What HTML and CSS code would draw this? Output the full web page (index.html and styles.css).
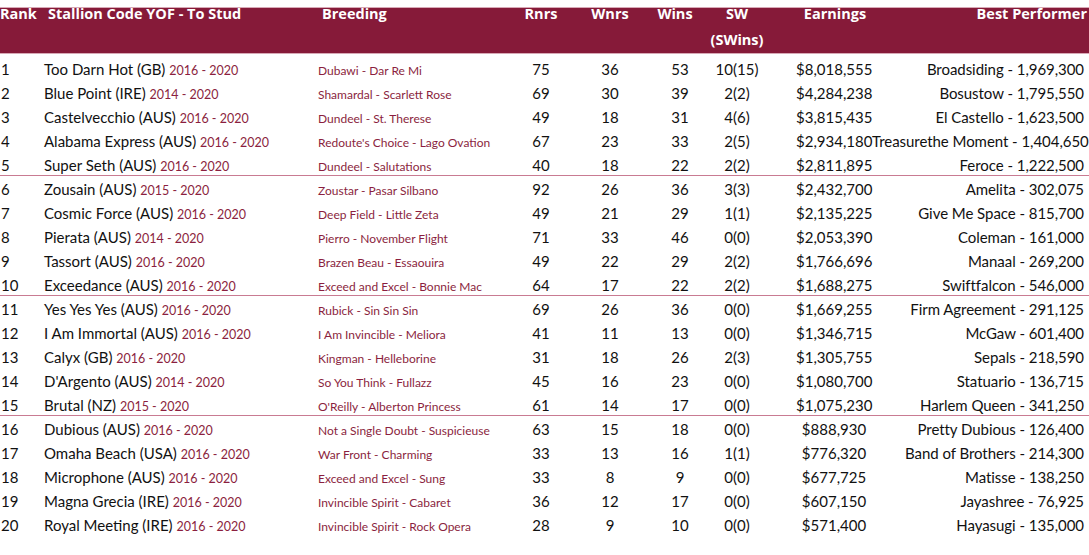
FILE: index.html
```html
<!DOCTYPE html>
<html>
<head>
<meta charset="utf-8">
<link rel="stylesheet" href="styles.css">
</head>
<body>
<div class="table">
  <div class="head">
    <div class="c rank">Rank</div>
    <div class="c name">Stallion Code YOF - To Stud</div>
    <div class="c breed">Breeding</div>
    <div class="c num">Rnrs</div>
    <div class="c num">Wnrs</div>
    <div class="c num wins">Wins</div>
    <div class="c sw">SW<br>(SWins)</div>
    <div class="c earn">Earnings</div>
    <div class="c best">Best Performer</div>
  </div>
  <div class="body">
    <div class="row"><div class="rank">1</div><div class="name">Too Darn Hot (GB) <span class="yr">2016 - 2020</span></div><div class="breed"><span>Dubawi - Dar Re Mi</span></div><div class="num">75</div><div class="num">36</div><div class="num">53</div><div class="sw">10(15)</div><div class="earn">$8,018,555</div><div class="best">Broadsiding - 1,969,300</div></div>
    <div class="row"><div class="rank">2</div><div class="name">Blue Point (IRE) <span class="yr">2014 - 2020</span></div><div class="breed"><span>Shamardal - Scarlett Rose</span></div><div class="num">69</div><div class="num">30</div><div class="num">39</div><div class="sw">2(2)</div><div class="earn">$4,284,238</div><div class="best">Bosustow - 1,795,550</div></div>
    <div class="row"><div class="rank">3</div><div class="name">Castelvecchio (AUS) <span class="yr">2016 - 2020</span></div><div class="breed"><span>Dundeel - St. Therese</span></div><div class="num">49</div><div class="num">18</div><div class="num">31</div><div class="sw">4(6)</div><div class="earn">$3,815,435</div><div class="best">El Castello - 1,623,500</div></div>
    <div class="row"><div class="rank">4</div><div class="name">Alabama Express (AUS) <span class="yr">2016 - 2020</span></div><div class="breed"><span>Redoute's Choice - Lago Ovation</span></div><div class="num">67</div><div class="num">23</div><div class="num">33</div><div class="sw">2(5)</div><div class="earn">$2,934,180</div><div class="best">Treasurethe Moment - 1,404,650</div></div>
    <div class="row end"><div class="rank">5</div><div class="name">Super Seth (AUS) <span class="yr">2016 - 2020</span></div><div class="breed"><span>Dundeel - Salutations</span></div><div class="num">40</div><div class="num">18</div><div class="num">22</div><div class="sw">2(2)</div><div class="earn">$2,811,895</div><div class="best">Feroce - 1,222,500</div></div>
    <div class="row"><div class="rank">6</div><div class="name">Zousain (AUS) <span class="yr">2015 - 2020</span></div><div class="breed"><span>Zoustar - Pasar Silbano</span></div><div class="num">92</div><div class="num">26</div><div class="num">36</div><div class="sw">3(3)</div><div class="earn">$2,432,700</div><div class="best">Amelita - 302,075</div></div>
    <div class="row"><div class="rank">7</div><div class="name">Cosmic Force (AUS) <span class="yr">2016 - 2020</span></div><div class="breed"><span>Deep Field - Little Zeta</span></div><div class="num">49</div><div class="num">21</div><div class="num">29</div><div class="sw">1(1)</div><div class="earn">$2,135,225</div><div class="best">Give Me Space - 815,700</div></div>
    <div class="row"><div class="rank">8</div><div class="name">Pierata (AUS) <span class="yr">2014 - 2020</span></div><div class="breed"><span>Pierro - November Flight</span></div><div class="num">71</div><div class="num">33</div><div class="num">46</div><div class="sw">0(0)</div><div class="earn">$2,053,390</div><div class="best">Coleman - 161,000</div></div>
    <div class="row"><div class="rank">9</div><div class="name">Tassort (AUS) <span class="yr">2016 - 2020</span></div><div class="breed"><span>Brazen Beau - Essaouira</span></div><div class="num">49</div><div class="num">22</div><div class="num">29</div><div class="sw">2(2)</div><div class="earn">$1,766,696</div><div class="best">Manaal - 269,200</div></div>
    <div class="row end"><div class="rank">10</div><div class="name">Exceedance (AUS) <span class="yr">2016 - 2020</span></div><div class="breed"><span>Exceed and Excel - Bonnie Mac</span></div><div class="num">64</div><div class="num">17</div><div class="num">22</div><div class="sw">2(2)</div><div class="earn">$1,688,275</div><div class="best">Swiftfalcon - 546,000</div></div>
    <div class="row"><div class="rank">11</div><div class="name">Yes Yes Yes (AUS) <span class="yr">2016 - 2020</span></div><div class="breed"><span>Rubick - Sin Sin Sin</span></div><div class="num">69</div><div class="num">26</div><div class="num">36</div><div class="sw">0(0)</div><div class="earn">$1,669,255</div><div class="best">Firm Agreement - 291,125</div></div>
    <div class="row"><div class="rank">12</div><div class="name">I Am Immortal (AUS) <span class="yr">2016 - 2020</span></div><div class="breed"><span>I Am Invincible - Meliora</span></div><div class="num">41</div><div class="num">11</div><div class="num">13</div><div class="sw">0(0)</div><div class="earn">$1,346,715</div><div class="best">McGaw - 601,400</div></div>
    <div class="row"><div class="rank">13</div><div class="name">Calyx (GB) <span class="yr">2016 - 2020</span></div><div class="breed"><span>Kingman - Helleborine</span></div><div class="num">31</div><div class="num">18</div><div class="num">26</div><div class="sw">2(3)</div><div class="earn">$1,305,755</div><div class="best">Sepals - 218,590</div></div>
    <div class="row"><div class="rank">14</div><div class="name">D'Argento (AUS) <span class="yr">2014 - 2020</span></div><div class="breed"><span>So You Think - Fullazz</span></div><div class="num">45</div><div class="num">16</div><div class="num">23</div><div class="sw">0(0)</div><div class="earn">$1,080,700</div><div class="best">Statuario - 136,715</div></div>
    <div class="row end"><div class="rank">15</div><div class="name">Brutal (NZ) <span class="yr">2015 - 2020</span></div><div class="breed"><span>O'Reilly - Alberton Princess</span></div><div class="num">61</div><div class="num">14</div><div class="num">17</div><div class="sw">0(0)</div><div class="earn">$1,075,230</div><div class="best">Harlem Queen - 341,250</div></div>
    <div class="row"><div class="rank">16</div><div class="name">Dubious (AUS) <span class="yr">2016 - 2020</span></div><div class="breed"><span>Not a Single Doubt - Suspicieuse</span></div><div class="num">63</div><div class="num">15</div><div class="num">18</div><div class="sw">0(0)</div><div class="earn">$888,930</div><div class="best">Pretty Dubious - 126,400</div></div>
    <div class="row"><div class="rank">17</div><div class="name">Omaha Beach (USA) <span class="yr">2016 - 2020</span></div><div class="breed"><span>War Front - Charming</span></div><div class="num">33</div><div class="num">13</div><div class="num">16</div><div class="sw">1(1)</div><div class="earn">$776,320</div><div class="best">Band of Brothers - 214,300</div></div>
    <div class="row"><div class="rank">18</div><div class="name">Microphone (AUS) <span class="yr">2016 - 2020</span></div><div class="breed"><span>Exceed and Excel - Sung</span></div><div class="num">33</div><div class="num">8</div><div class="num">9</div><div class="sw">0(0)</div><div class="earn">$677,725</div><div class="best">Matisse - 138,250</div></div>
    <div class="row"><div class="rank">19</div><div class="name">Magna Grecia (IRE) <span class="yr">2016 - 2020</span></div><div class="breed"><span>Invincible Spirit - Cabaret</span></div><div class="num">36</div><div class="num">12</div><div class="num">17</div><div class="sw">0(0)</div><div class="earn">$607,150</div><div class="best">Jayashree - 76,925</div></div>
    <div class="row"><div class="rank">20</div><div class="name">Royal Meeting (IRE) <span class="yr">2016 - 2020</span></div><div class="breed"><span>Invincible Spirit - Rock Opera</span></div><div class="num">28</div><div class="num">9</div><div class="num">10</div><div class="sw">0(0)</div><div class="earn">$571,400</div><div class="best">Hayasugi - 135,000</div></div>
  </div>
</div>
</body>
</html>
```
FILE: styles.css
```css
html, body {
  margin: 0;
  padding: 0;
  background: #ffffff;
}
body {
  font-family: "Lato", "Liberation Sans", sans-serif;
  color: #111111;
  width: 1089px;
  overflow: hidden;
}
.table {
  padding-top: 7px;
}
.head, .row {
  display: grid;
  grid-template-columns: 44px 274px 200px 46px 92px 48px 66px 26px 76px 212px;
  white-space: nowrap;
}
.head {
  background: #861a39;
  border-top: 1px solid #d8a9b6;
  border-bottom: 1px solid #d8a9b6;
  height: 45px;
  color: #ffffff;
  font-family: "Open Sans", "Lato", sans-serif;
  font-weight: 700;
  font-size: 14.5px;
  line-height: 26px;
}
.head .c {
  margin-top: -7px;
}
.head .rank { padding-left: 0; }
.head .name, .head .breed { padding-left: 4px; }
.head .num { text-align: center; }
.head .wins { padding-right: 10px; }
.head .sw { grid-column: 7 / 9; padding-right: 26px; text-align: center; }
.head .earn { grid-column: 9; padding-left: 2px; text-align: center; }
.head .best { grid-column: 10; margin-right: -3px; text-align: right; }
.body {
  padding-top: 3px;
}
.row {
  height: 24px;
  line-height: 24px;
  font-size: 15px;
}
.row.end {
  height: 20px;
  line-height: 20px;
  padding-top: 2px;
  margin-bottom: 1px;
  border-bottom: 1px solid #c97b92;
}
.row .rank { padding-left: 1px; }
.yr {
  color: #8b1f40;
  font-size: 12.5px;
}
.row .breed span {
  color: #8b1f40;
  font-size: 12px;
}
.row .num, .row .sw, .row .earn { text-align: center; }
.row .sw { grid-column: 7 / 9; padding-right: 26px; }
.row .earn { grid-column: 9; }
.row .best { grid-column: 10; text-align: right; letter-spacing: -0.05px; }
```
